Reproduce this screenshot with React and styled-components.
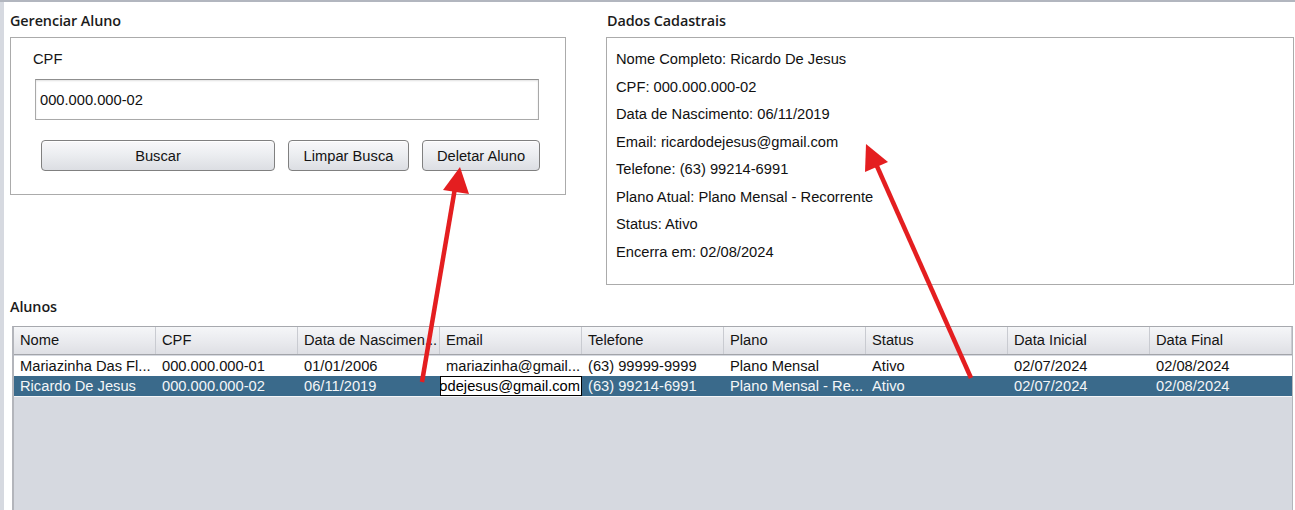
import React from "react";
import styled, { createGlobalStyle } from "styled-components";

const Global = createGlobalStyle`
  html, body { margin: 0; padding: 0; background: #ffffff; overflow: hidden; }
  body { font-family: "Liberation Sans", Arial, sans-serif; }
  * { box-sizing: border-box; }
`;

const FS = "14.7px";

const Page = styled.div`
  position: relative;
  width: 1295px;
  height: 510px;
  overflow: hidden;
  display: flex;
  border-top: 2px solid #b2b6bf;
  background: #ffffff;
`;

const Strip = styled.div`
  width: 4px;
  flex: none;
  background: #d6d9e0;
`;

const Main = styled.div`
  flex: 1;
  padding-left: 6px;
  display: flex;
  flex-direction: column;
`;

const TopRow = styled.div`
  display: grid;
  grid-template-columns: 556px 688px;
  column-gap: 40px;
  align-items: start;
`;

const Section = styled.section`
  display: flex;
  flex-direction: column;
`;

const Heading = styled.h2`
  margin: 0;
  height: ${(p) => p.$h || 35}px;
  padding-top: ${(p) => p.$pt || 9}px;
  padding-left: ${(p) => p.$pl || 0}px;
  font-family: "Open Sans", "Noto Sans", sans-serif;
  font-weight: 600;
  font-size: 14.4px;
  line-height: 19px;
  color: #1b1b1b;
  letter-spacing: -0.1px;
`;

const Box = styled.div`
  border: 1px solid #ababab;
  height: ${(p) => p.$h}px;
  background: #ffffff;
`;

const SearchBox = styled(Box)`
  display: flex;
  flex-direction: column;
  padding: 13px 0 0 22px;
`;

const Label = styled.div`
  font-size: ${FS};
  line-height: 16px;
  color: #151515;
`;

const Input = styled.div`
  margin: 12px 0 0 2px;
  width: 504px;
  height: 41px;
  border: 1px solid #a9a9a9;
  border-top-color: #8f8f8f;
  box-shadow: inset 0 1px 2px rgba(0, 0, 0, 0.12);
  display: flex;
  align-items: center;
  padding-left: 4px;
  font-size: ${FS};
  color: #111;
`;

const ButtonRow = styled.div`
  margin: 20px 0 0 8px;
  display: flex;
  gap: 13px;
`;

const Button = styled.div`
  width: ${(p) => p.$w}px;
  height: 31px;
  border: 1px solid #808080;
  border-radius: 4px;
  background: linear-gradient(#f8f8fa 0%, #eceef1 45%, #dcdee3 100%);
  box-shadow: inset 0 1px 0 #ffffff;
  display: flex;
  align-items: center;
  justify-content: center;
  font-size: ${FS};
  color: #141414;
  padding-top: 1px;
`;

const InfoBox = styled(Box)`
  padding: 8px 0 0 9px;
  display: flex;
  flex-direction: column;
`;

const InfoLine = styled.div`
  height: 27.5px;
  line-height: 27.5px;
  font-size: ${FS};
  color: #111;
`;

const TableWrap = styled.div`
  margin-left: 2px;
  width: 1281px;
  height: 200px;
  border-top: 1px solid #a7a9ae;
  border-left: 2px solid #b3b5bb;
  border-right: 1px solid #b3b5bb;
  background: #d6d9e0;
  display: flex;
  flex-direction: column;
`;

const Grid = styled.div`
  display: grid;
  grid-template-columns: repeat(9, 142px);
`;

const HeaderRow = styled(Grid)`
  height: 28px;
  background: linear-gradient(#f5f6f8 0%, #e9eaee 55%, #dedfe4 100%);
  border-bottom: 1px solid #a2a4a9;
`;

const HeaderCell = styled.div`
  display: flex;
  align-items: center;
  padding-left: 6px;
  font-size: ${FS};
  color: #141414;
  border-right: 1px solid #c9cbd1;
  white-space: nowrap;
  overflow: hidden;
`;

const BodyRow = styled(Grid)`
  height: 20px;
  background: ${(p) => (p.$selected ? "#3a6a8b" : "#ffffff")};
  color: ${(p) => (p.$selected ? "#f4f6f8" : "#111111")};
  margin-top: ${(p) => (p.$first ? 1 : 0)}px;
`;

const Cell = styled.div`
  display: flex;
  align-items: center;
  padding-left: 6px;
  font-size: ${FS};
  white-space: nowrap;
  overflow: hidden;
`;

const EditCell = styled.div`
  display: flex;
  align-items: center;
  justify-content: flex-end;
  padding-right: 1px;
  background: #ffffff;
  color: #000;
  border: 1px solid #000;
  font-size: ${FS};
  white-space: nowrap;
  overflow: hidden;
`;

const Divider = styled.div`
  height: 1px;
  background: #f4f5f7;
`;

const Overlay = styled.svg`
  position: absolute;
  left: 0;
  top: -2px;
  width: 1295px;
  height: 510px;
  pointer-events: none;
`;

const columns = [
  "Nome",
  "CPF",
  "Data de Nascimen...",
  "Email",
  "Telefone",
  "Plano",
  "Status",
  "Data Inicial",
  "Data Final",
];

const rows = [
  ["Mariazinha Das Fl...", "000.000.000-01", "01/01/2006", "mariazinha@gmail...", "(63) 99999-9999", "Plano Mensal", "Ativo", "02/07/2024", "02/08/2024"],
  ["Ricardo De Jesus", "000.000.000-02", "06/11/2019", "ricardodejesus@gmail.com", "(63) 99214-6991", "Plano Mensal - Re...", "Ativo", "02/07/2024", "02/08/2024"],
];

const info = [
  "Nome Completo: Ricardo De Jesus",
  "CPF: 000.000.000-02",
  "Data de Nascimento: 06/11/2019",
  "Email: ricardodejesus@gmail.com",
  "Telefone: (63) 99214-6991",
  "Plano Atual: Plano Mensal - Recorrente",
  "Status: Ativo",
  "Encerra em: 02/08/2024",
];

export default function App() {
  return (
    <>
      <Global />
      <Page>
        <Strip />
        <Main>
          <TopRow>
            <Section>
              <Heading>Gerenciar Aluno</Heading>
              <SearchBox $h={158}>
                <Label>CPF</Label>
                <Input>000.000.000-02</Input>
                <ButtonRow>
                  <Button $w={234}>Buscar</Button>
                  <Button $w={121}>Limpar Busca</Button>
                  <Button $w={118}>Deletar Aluno</Button>
                </ButtonRow>
              </SearchBox>
            </Section>
            <Section>
              <Heading $pl={1}>Dados Cadastrais</Heading>
              <InfoBox $h={248}>
                {info.map((t) => (
                  <InfoLine key={t}>{t}</InfoLine>
                ))}
              </InfoBox>
            </Section>
          </TopRow>
          <Heading $h={43} $pt={12}>Alunos</Heading>
          <TableWrap>
            <HeaderRow>
              {columns.map((c) => (
                <HeaderCell key={c}>{c}</HeaderCell>
              ))}
            </HeaderRow>
            {rows.map((r, i) => (
              <BodyRow key={i} $selected={i === 1} $first={i === 0}>
                {r.map((v, j) =>
                  i === 1 && j === 3 ? (
                    <EditCell key={j}>{v}</EditCell>
                  ) : (
                    <Cell key={j}>{v}</Cell>
                  )
                )}
              </BodyRow>
            ))}
            <Divider />
          </TableWrap>
        </Main>
        <Overlay viewBox="0 0 1295 510">
          <line x1="422" y1="382" x2="455" y2="188" stroke="#e41e20" strokeWidth="4.5" />
          <polygon points="460,167 443,190 469,194" fill="#e41e20" />
          <line x1="971" y1="378" x2="876" y2="164" stroke="#e41e20" strokeWidth="4.5" />
          <polygon points="866,144 865,172 888,162" fill="#e41e20" />
        </Overlay>
      </Page>
    </>
  );
}
